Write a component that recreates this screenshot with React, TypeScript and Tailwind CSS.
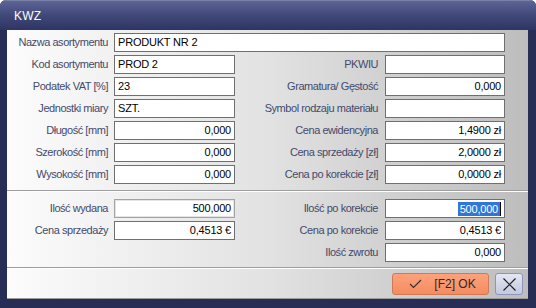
import React from 'react';

const FONT = "font-['Liberation_Sans',Arial,sans-serif]";

type FieldProps = {
  value?: string;
  left?: boolean;
  span?: boolean;
  selected?: boolean;
  readOnly?: boolean;
};

function Field({ value = '', left, span, selected, readOnly }: FieldProps) {
  return (
    <div
      className={[
        'h-[19px] flex items-center px-[3px] text-[11px] tracking-[-0.2px] text-black bg-white border overflow-hidden whitespace-nowrap',
        left ? 'justify-start' : 'justify-end',
        span ? 'col-span-3 w-[391px]' : '',
        readOnly ? 'border-[#a3a3a3] shadow-[inset_0_0_0_1px_#e4e4e4]' : 'border-[#6f6f6f]',
      ].join(' ')}
    >
      {selected ? (
        <>
          <span className="bg-[#3176d6] text-white leading-[14px] px-[2px]">{value}</span>
          <span className="w-[1px] h-[14px] bg-black" />
        </>
      ) : (
        value
      )}
    </div>
  );
}

function Label({ text, wide }: { text: string; wide?: boolean }) {
  return (
    <div
      className={[
        'h-[19px] flex items-center justify-end text-[11px] tracking-[-0.45px] text-[#434a6c] whitespace-nowrap',
        wide ? 'pr-[7px]' : 'pr-[6px]',
      ].join(' ')}
    >
      {text}
    </div>
  );
}

const GRID = 'grid grid-cols-[107px_121px_150px_120px] gap-y-[3px]';

const topRows: [string, string, boolean, string, string][] = [
  ['Kod asortymentu', 'PROD 2', true, 'PKWIU', ''],
  ['Podatek VAT [%]', '23', true, 'Gramatura/ Gęstość', '0,000'],
  ['Jednostki miary', 'SZT.', true, 'Symbol rodzaju materiału', ''],
  ['Długość [mm]', '0,000', false, 'Cena ewidencyjna', '1,4900 zł'],
  ['Szerokość [mm]', '0,000', false, 'Cena sprzedaży [zł]', '2,0000 zł'],
  ['Wysokość [mm]', '0,000', false, 'Cena po korekcie [zł]', '0,0000 zł'],
];

function Divider() {
  return (
    <div className="shrink-0">
      <div className="h-[1px] bg-[#9d9d9d]" />
      <div className="h-[1px] bg-white" />
    </div>
  );
}

export default function App() {
  return (
    <div className={`w-[536px] h-[308px] bg-[#272d55] rounded-t-[6px] overflow-hidden flex flex-col ${FONT}`}>
      {/* Title bar */}
      <div className="h-[30px] shrink-0 flex items-center px-[14px] bg-gradient-to-b from-[#5d6595] via-[#404879] to-[#2e3563] border-t border-[#7a80a6]">
        <span className="text-white text-[12px] tracking-[0.2px]">KWZ</span>
      </div>

      {/* Body */}
      <div className="mx-[7px] w-[521px] h-[269px] flex flex-col bg-gradient-to-r from-[#fcfcfc] via-[#e2e2e2] to-[#bdbdbd]">
        {/* Product data */}
        <div className={`${GRID} pt-[3px] pb-[6px]`}>
          <Label text="Nazwa asortymentu" />
          <Field value="PRODUKT NR 2" left span />
          {topRows.map(([l1, v1, leftAlign, l2, v2]) => (
            <React.Fragment key={l1}>
              <Label text={l1} />
              <Field value={v1} left={leftAlign} />
              <Label text={l2} wide />
              <Field value={v2} />
            </React.Fragment>
          ))}
        </div>

        <Divider />

        {/* Quantities */}
        <div className={`${GRID} pt-[7px] pb-[5px]`}>
          <Label text="Ilość wydana" />
          <Field value="500,000" readOnly />
          <Label text="Ilość po korekcie" wide />
          <Field value="500,000" selected />

          <Label text="Cena sprzedaży" />
          <Field value="0,4513 €" />
          <Label text="Cena po korekcie" wide />
          <Field value="0,4513 €" />

          <div />
          <div />
          <Label text="Ilość zwrotu" wide />
          <Field value="0,000" />
        </div>

        <Divider />

        {/* Buttons */}
        <div className="h-[29px] flex justify-end items-start gap-[6px] pt-[4px] pr-[5px]">
          <button className="w-[97px] h-[22px] rounded-[3px] border border-[#cf7a55] bg-gradient-to-b from-[#fca27b] to-[#f68b60] flex items-center justify-center gap-[12px] pl-[4px] text-[12px] text-[#2a2a2a]">
            <svg width="13" height="10" viewBox="0 0 13 10">
              <path d="M1 5 L4.5 8.5 L12 1" fill="none" stroke="#333" strokeWidth="1.2" />
            </svg>
            <span>[F2] OK</span>
          </button>
          <button className="w-[28px] h-[22px] rounded-[3px] border border-[#8d95b8] bg-gradient-to-b from-[#e4e7f3] to-[#c3c9df] flex items-center justify-center">
            <svg width="15" height="15" viewBox="0 0 15 15">
              <path d="M1.5 1.5 L13.5 13.5 M13.5 1.5 L1.5 13.5" fill="none" stroke="#1f1f1f" strokeWidth="1.2" />
            </svg>
          </button>
        </div>
        <div className="h-[1px] bg-[#9d9d9d]" />
      </div>
    </div>
  );
}
